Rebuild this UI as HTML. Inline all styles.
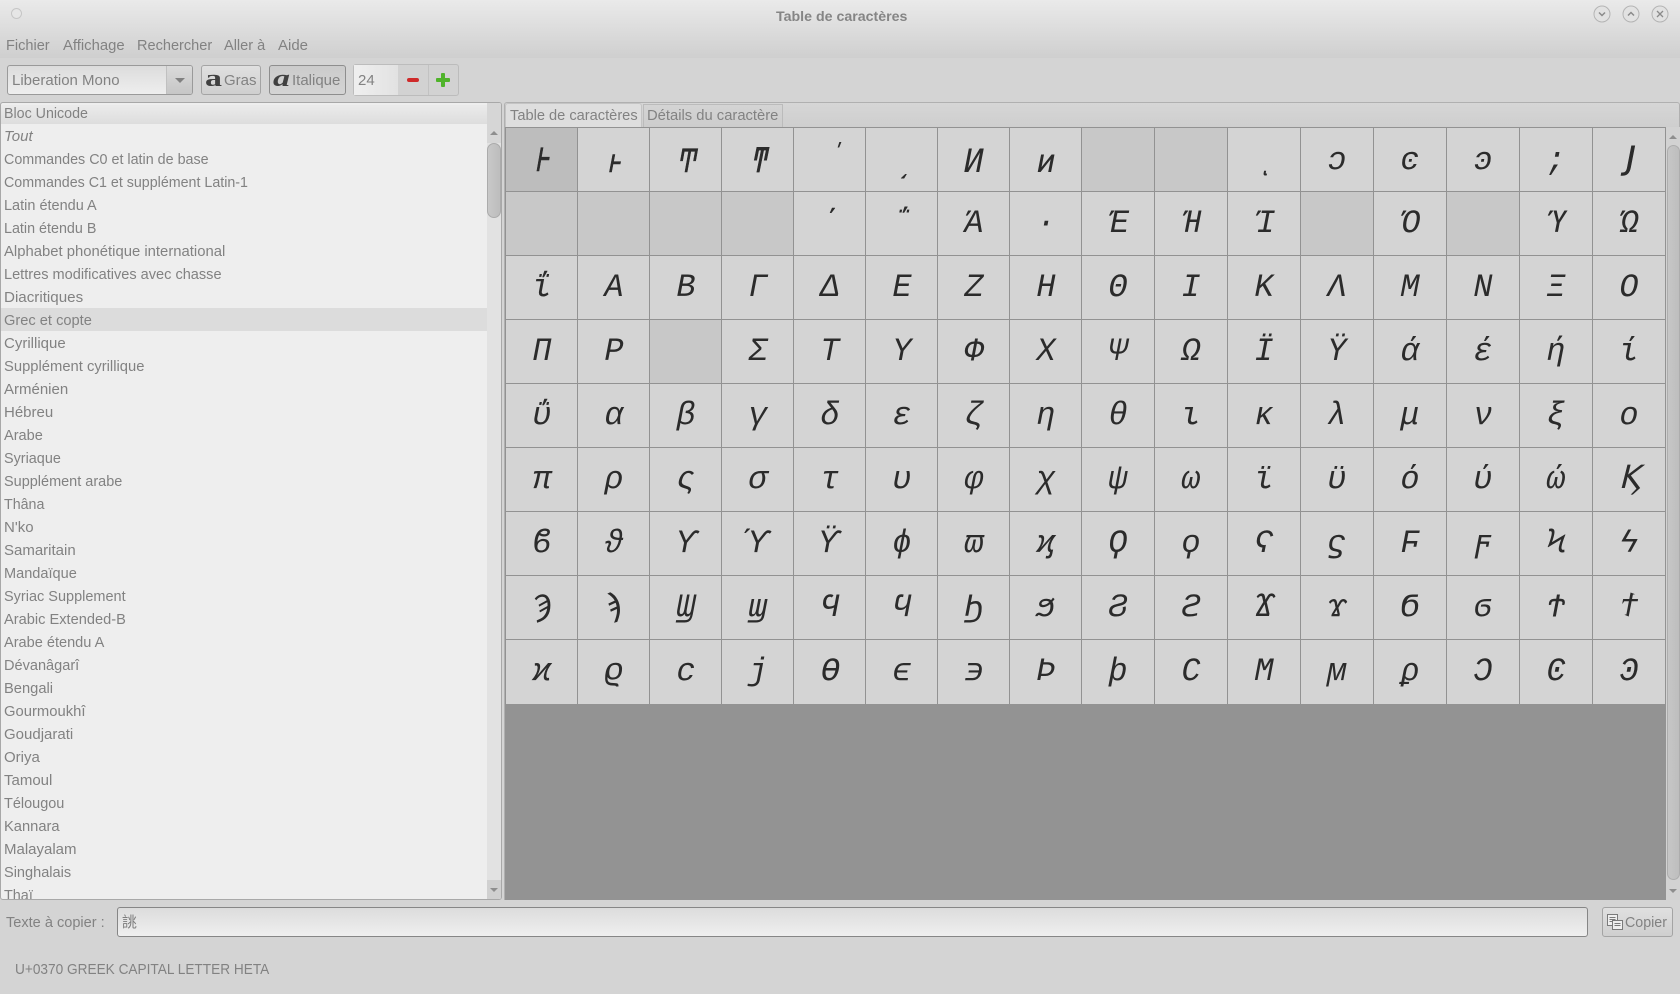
<!DOCTYPE html>
<html lang="fr"><head><meta charset="utf-8"><title>Table de caractères</title>
<style>
html,body{margin:0;padding:0;width:1680px;height:994px;overflow:hidden;background:#d4d4d4}
body{position:relative;font-family:"Liberation Sans","Noto Sans CJK SC",sans-serif;font-size:15px;color:#828282}
.a{position:absolute;box-sizing:border-box}
.t{position:absolute;white-space:nowrap;line-height:20px;height:20px;transform-origin:0 50%}
#list .t{left:3px;margin-top:2px}
svg text{font-family:"Liberation Mono","DejaVu Sans Mono",monospace;font-style:italic;font-size:32px;fill:#2b2b2b;text-anchor:middle}
svg text.b{stroke:#2b2b2b;stroke-width:.6}
svg.ic text{font-style:normal;text-anchor:start}
</style></head><body>
<div class="a" style="left:0;top:0;width:1680px;height:58px;background:linear-gradient(#eaeaea,#cfcfcf)"></div>
<div class="a" style="left:11px;top:8px;width:11px;height:11px;border-radius:50%;background:#e6e6e6;border:1px solid #c6c6c6"></div>
<div class="t" style="left:776px;top:7px;font-weight:bold;font-size:14.2px;color:#858585">Table de caractères</div>
<svg class="a" style="left:1590px;top:2px" width="84" height="24" fill="none" stroke="#8a8a8a">
<circle cx="12" cy="12" r="8" stroke="#b4b4b4" fill="#e2e2e2"/><path d="M9 10.5l3 3 3-3" stroke-width="1.5"/>
<circle cx="41" cy="12" r="8" stroke="#b4b4b4" fill="#e2e2e2"/><path d="M38 13.5l3-3 3 3" stroke-width="1.5"/>
<circle cx="70" cy="12" r="8" stroke="#b4b4b4" fill="#e2e2e2"/><path d="M67 9l6 6M73 9l-6 6" stroke-width="1.3"/>
</svg>
<div class="t" style="left:6px;top:36px;transform:scaleX(.97)">Fichier</div>
<div class="t" style="left:63px;top:36px;transform:scaleX(.99)">Affichage</div>
<div class="t" style="left:137px;top:36px;transform:scaleX(.97)">Rechercher</div>
<div class="t" style="left:224px;top:36px;transform:scaleX(.97)">Aller à</div>
<div class="t" style="left:278px;top:36px">Aide</div>

<div class="a" style="left:7px;top:65px;width:186px;height:30px;border:1px solid #9a9a9a;border-radius:3px;background:linear-gradient(#dcdcdc,#eeeeee)"></div>
<div class="a" style="left:166px;top:66px;width:26px;height:28px;background:linear-gradient(#dadada,#c6c6c6);border-left:1px solid #c0c0c0;border-radius:0 2px 2px 0"></div>
<div class="a" style="left:175px;top:78px;width:0;height:0;border:5px solid transparent;border-top:5px solid #808080;border-bottom:0"></div>
<div class="t" style="left:12px;top:71px">Liberation Mono</div>

<div class="a" style="left:201px;top:65px;width:60px;height:30px;border:1px solid #a4a4a4;border-radius:3px;background:linear-gradient(#e0e0e0,#cfcfcf)"></div>
<svg class="a ic" style="left:205px;top:70px" width="20" height="20"><text x="0" y="16" style="font-family:'Liberation Serif';font-weight:bold;font-size:24px;fill:#404040" textLength="17" lengthAdjust="spacingAndGlyphs">a</text></svg>
<div class="t" style="left:224px;top:71px">Gras</div>

<div class="a" style="left:269px;top:65px;width:77px;height:30px;border:1px solid #8e8e8e;border-radius:3px;background:linear-gradient(#cbcbcb,#d4d4d4)"></div>
<svg class="a ic" style="left:273px;top:70px" width="20" height="20"><text x="0" y="16" style="font-family:'Liberation Serif';font-weight:bold;font-style:italic;font-size:24px;fill:#404040" textLength="17" lengthAdjust="spacingAndGlyphs">a</text></svg>
<div class="t" style="left:292px;top:71px">Italique</div>

<div class="a" style="left:353px;top:64px;width:106px;height:32px;border:1px solid #bcbcbc;border-radius:3px;background:#d2d2d2"></div>
<div class="a" style="left:354px;top:65px;width:44px;height:30px;background:linear-gradient(90deg,#efefef,#e2e2e2)"></div>
<div class="a" style="left:428px;top:65px;width:1px;height:30px;background:#c2c2c2"></div>
<div class="t" style="left:358px;top:71px">24</div>
<div class="a" style="left:407px;top:78px;width:12px;height:4px;border-radius:2px;background:#cf2a2a"></div>
<div class="a" style="left:436px;top:78px;width:14px;height:4px;border-radius:1px;background:#4fb32a"></div>
<div class="a" style="left:441px;top:73px;width:4px;height:14px;border-radius:1px;background:#4fb32a"></div>

<div id="list" class="a" style="left:0;top:102px;width:502px;height:798px;border:1px solid #a8a8a8;border-radius:3px;background:#eeeeee;overflow:hidden">
<div class="a" style="left:0;top:2px;width:486px;height:19px;background:linear-gradient(#ebebeb,#dddddd)"></div>
<div class="a" style="left:0;top:205px;width:486px;height:23px;background:#dcdcdc"></div>
<div class="t" style="top:-1px;transform:scaleX(.95)">Bloc Unicode</div>
<div class="t" style="top:22px;font-style:italic">Tout</div>
<div class="t" style="top:45px;transform:scaleX(.955)">Commandes C0 et latin de base</div>
<div class="t" style="top:68px;transform:scaleX(.95)">Commandes C1 et supplément Latin-1</div>
<div class="t" style="top:91px;transform:scaleX(.966)">Latin étendu A</div>
<div class="t" style="top:114px;transform:scaleX(.955)">Latin étendu B</div>
<div class="t" style="top:137px;transform:scaleX(.99)">Alphabet phonétique international</div>
<div class="t" style="top:160px;transform:scaleX(.97)">Lettres modificatives avec chasse</div>
<div class="t" style="top:183px;transform:scaleX(1.01)">Diacritiques</div>
<div class="t" style="top:206px;transform:scaleX(.976)">Grec et copte</div>
<div class="t" style="top:229px">Cyrillique</div>
<div class="t" style="top:252px;transform:scaleX(.985)">Supplément cyrillique</div>
<div class="t" style="top:275px">Arménien</div>
<div class="t" style="top:298px">Hébreu</div>
<div class="t" style="top:321px;transform:scaleX(.97)">Arabe</div>
<div class="t" style="top:344px;transform:scaleX(.96)">Syriaque</div>
<div class="t" style="top:367px;transform:scaleX(.965)">Supplément arabe</div>
<div class="t" style="top:390px;transform:scaleX(.95)">Thâna</div>
<div class="t" style="top:413px">N'ko</div>
<div class="t" style="top:436px">Samaritain</div>
<div class="t" style="top:459px;transform:scaleX(.97)">Mandaïque</div>
<div class="t" style="top:482px;transform:scaleX(.966)">Syriac Supplement</div>
<div class="t" style="top:505px;transform:scaleX(.974)">Arabic Extended-B</div>
<div class="t" style="top:528px;transform:scaleX(.97)">Arabe étendu A</div>
<div class="t" style="top:551px;transform:scaleX(.97)">Dévanâgarî</div>
<div class="t" style="top:574px;transform:scaleX(.98)">Bengali</div>
<div class="t" style="top:597px;transform:scaleX(.987)">Gourmoukhî</div>
<div class="t" style="top:620px">Goudjarati</div>
<div class="t" style="top:643px">Oriya</div>
<div class="t" style="top:666px">Tamoul</div>
<div class="t" style="top:689px;transform:scaleX(.965)">Télougou</div>
<div class="t" style="top:712px;transform:scaleX(.98)">Kannara</div>
<div class="t" style="top:735px">Malayalam</div>
<div class="t" style="top:758px;transform:scaleX(.97)">Singhalais</div>
<div class="t" style="top:781px;transform:scaleX(.96)">Thaï</div>
<div class="a" style="left:486px;top:0;width:14px;height:796px;background:#e2e2e2"></div>
<div class="a" style="left:486px;top:0;width:14px;height:40px;background:#d6d6d6"></div>
<div class="a" style="left:486px;top:777px;width:14px;height:19px;background:#d0d0d0"></div>
<div class="a" style="left:486px;top:40px;width:14px;height:75px;border:1px solid #ababab;border-radius:7px;background:linear-gradient(90deg,#c8c8c8,#bdbdbd)"></div>
<div class="a" style="left:489px;top:28px;width:0;height:0;border:4px solid transparent;border-bottom:4px solid #8e8e8e;border-top:0"></div>
<div class="a" style="left:489px;top:785px;width:0;height:0;border:4px solid transparent;border-top:4px solid #8e8e8e;border-bottom:0"></div>
</div>

<div class="a" style="left:504px;top:102px;width:1176px;height:26px;border:1px solid #b0b0b0;border-bottom:0;border-radius:3px 3px 0 0;background:linear-gradient(#d6d6d6,#cecece)"></div>
<div class="a" style="left:505px;top:103px;width:137px;height:25px;border:1px solid #c4c4c4;border-bottom:0;border-radius:3px 3px 0 0;background:#dedede"></div>
<div class="t" style="left:510px;top:106px;transform:scaleX(.975)">Table de caractères</div>
<div class="a" style="left:643px;top:104px;width:140px;height:24px;border:1px solid #bbb;border-bottom:0;background:linear-gradient(#d4d4d4,#cccccc)"></div>
<div class="t" style="left:647px;top:106px;transform:scaleX(.985)">Détails du caractère</div>

<svg class="a" style="left:505px;top:127px" width="1175" height="773" viewBox="505 127 1175 773">
<rect x="505" y="127" width="1161" height="773" fill="#939393"/>
<rect x="505" y="127" width="1161" height="577" fill="#d4d4d4"/>
<rect x="505" y="127" width="72" height="64" fill="#bdbdbd"/>
<g fill="#c8c8c8">
<rect x="1081" y="127" width="146" height="64"/>
<rect x="505" y="191" width="288" height="64"/>
<rect x="1300" y="191" width="73" height="64"/>
<rect x="1446" y="191" width="73" height="64"/>
<rect x="649" y="319" width="72" height="64"/>
</g>
<path stroke="#929292" fill="none" d="M505 127.5H1666M505 191.5H1666M505 255.5H1666M505 319.5H1666M505 383.5H1666M505 447.5H1666M505 511.5H1666M505 575.5H1666M505 639.5H1666M505.5 127V704M577.5 127V704M649.5 127V704M721.5 127V704M793.5 127V704M865.5 127V704M937.5 127V704M1009.5 127V704M1081.5 127V704M1154.5 127V704M1227.5 127V704M1300.5 127V704M1373.5 127V704M1446.5 127V704M1519.5 127V704M1592.5 127V704M1665.5 127V704"/>
<g transform="translate(0,172)"><text class="b" transform="translate(542,0) scale(.7,1)" y="-1">Ͱ</text><text class="b" transform="translate(614,0) scale(.76,1)">ͱ</text><text class="b" transform="translate(686,0) scale(.72,1)">Ͳ</text><text class="b" transform="translate(758,0) scale(.86,1.06)">ͳ</text><text x="837" y="-12" style="font-family:'DejaVu Sans',sans-serif;font-size:22px">ʹ</text><text x="902">͵</text><text x="974">Ͷ</text><text x="1046">ͷ</text><text x="1264" y="-3">ͺ</text><text x="1337" y="-3">ͻ</text><text x="1410" y="-3">ͼ</text><text x="1483" y="-3">ͽ</text><text x="1556" y="-3">;</text><text class="b" x="1631" y="-3" style="font-family:'DejaVu Sans',sans-serif">Ϳ</text></g>
<g transform="translate(0,232)"><text x="830">΄</text><text x="902">΅</text><text x="974">Ά</text><text x="1046">·</text><text x="1118">Έ</text><text x="1191">Ή</text><text x="1264">Ί</text><text x="1410">Ό</text><text x="1556">Ύ</text><text x="1629">Ώ</text></g>
<g transform="translate(0,296)"><text x="542">ΐ</text><text x="614">Α</text><text x="686">Β</text><text x="758">Γ</text><text x="830">Δ</text><text x="902">Ε</text><text x="974">Ζ</text><text x="1046">Η</text><text x="1118">Θ</text><text x="1191">Ι</text><text x="1264">Κ</text><text x="1337">Λ</text><text x="1410">Μ</text><text x="1483">Ν</text><text x="1556">Ξ</text><text x="1629">Ο</text></g>
<g transform="translate(0,360)"><text x="542">Π</text><text x="614">Ρ</text><text x="758">Σ</text><text x="830">Τ</text><text x="902">Υ</text><text x="974">Φ</text><text x="1046">Χ</text><text x="1118">Ψ</text><text x="1191">Ω</text><text x="1264">Ϊ</text><text x="1337">Ϋ</text><text x="1410">ά</text><text x="1483">έ</text><text x="1556">ή</text><text x="1629">ί</text></g>
<g transform="translate(0,424)"><text x="542">ΰ</text><text x="614">α</text><text x="686">β</text><text x="758">γ</text><text x="830">δ</text><text x="902">ε</text><text x="974">ζ</text><text x="1046">η</text><text x="1118">θ</text><text x="1191">ι</text><text x="1264">κ</text><text x="1337">λ</text><text x="1410">μ</text><text x="1483">ν</text><text x="1556">ξ</text><text x="1629">ο</text></g>
<g transform="translate(0,488)"><text x="542">π</text><text x="614">ρ</text><text x="686">ς</text><text x="758">σ</text><text x="830">τ</text><text x="902">υ</text><text x="974">φ</text><text x="1046">χ</text><text x="1118">ψ</text><text x="1191">ω</text><text x="1264">ϊ</text><text x="1337">ϋ</text><text x="1410">ό</text><text x="1483">ύ</text><text x="1556">ώ</text><text x="1629">Ϗ</text></g>
<g transform="translate(0,552)"><text x="542">ϐ</text><text x="614">ϑ</text><text x="686">ϒ</text><text x="758">ϓ</text><text x="830">ϔ</text><text x="902">ϕ</text><text x="974">ϖ</text><text x="1046">ϗ</text><text x="1118">Ϙ</text><text x="1191">ϙ</text><text x="1264">Ϛ</text><text x="1337">ϛ</text><text x="1410">Ϝ</text><text x="1483">ϝ</text><text x="1556">Ϟ</text><text x="1629">ϟ</text></g>
<g transform="translate(0,616)"><text x="542">Ϡ</text><text x="614">ϡ</text><text x="686">Ϣ</text><text x="758">ϣ</text><text x="830">Ϥ</text><text x="902">ϥ</text><text x="974">Ϧ</text><text x="1046">ϧ</text><text x="1118">Ϩ</text><text x="1191">ϩ</text><text x="1264">Ϫ</text><text x="1337">ϫ</text><text x="1410">Ϭ</text><text x="1483">ϭ</text><text x="1556">Ϯ</text><text x="1629">ϯ</text></g>
<g transform="translate(0,680)"><text x="542">ϰ</text><text x="614">ϱ</text><text x="686">ϲ</text><text x="758">ϳ</text><text x="830">ϴ</text><text x="902">ϵ</text><text x="974">϶</text><text x="1046">Ϸ</text><text x="1118">ϸ</text><text x="1191">Ϲ</text><text x="1264">Ϻ</text><text x="1337">ϻ</text><text x="1410">ϼ</text><text x="1483">Ͻ</text><text x="1556">Ͼ</text><text x="1629">Ͽ</text></g>
</svg>
<div class="a" style="left:504px;top:127px;width:1px;height:773px;background:#b0b0b0"></div>
<div class="a" style="left:1666px;top:127px;width:14px;height:773px;background:#d2d2d2"></div>
<div class="a" style="left:1667px;top:145px;width:13px;height:735px;border:1px solid #adadad;border-radius:7px;background:linear-gradient(90deg,#c6c6c6,#bebebe)"></div>
<div class="a" style="left:1669px;top:135px;width:0;height:0;border:4px solid transparent;border-bottom:4px solid #8e8e8e;border-top:0"></div>
<div class="a" style="left:1669px;top:889px;width:0;height:0;border:4px solid transparent;border-top:4px solid #8e8e8e;border-bottom:0"></div>

<div class="t" style="left:6px;top:913px;transform:scaleX(.97)">Texte à copier :</div>
<div class="a" style="left:117px;top:907px;width:1471px;height:30px;border:1px solid #868686;border-radius:3px;background:linear-gradient(#dcdcdc,#efefef)"></div>
<div class="t" style="left:122px;top:913px;font-size:15px;color:#7c7c7c">誂</div>
<div class="a" style="left:1602px;top:907px;width:71px;height:30px;border:1px solid #a4a4a4;border-radius:3px;background:linear-gradient(#e0e0e0,#cfcfcf)"></div>
<svg class="a" style="left:1606px;top:913px" width="18" height="18" fill="#efefef" stroke="#7a7a7a"><rect x="1.5" y="1.5" width="10" height="11"/><rect x="6.5" y="7.5" width="10" height="9"/><path d="M3.5 4.5h6M3.5 6.5h6M3.5 8.5h3M8.5 10.5h6M8.5 12.5h6"/></svg>
<div class="t" style="left:1625px;top:913px;transform:scaleX(.95)">Copier</div>
<div class="t" style="left:15px;top:960px;transform:scaleX(.91)">U+0370 GREEK CAPITAL LETTER HETA</div>
</body></html>
